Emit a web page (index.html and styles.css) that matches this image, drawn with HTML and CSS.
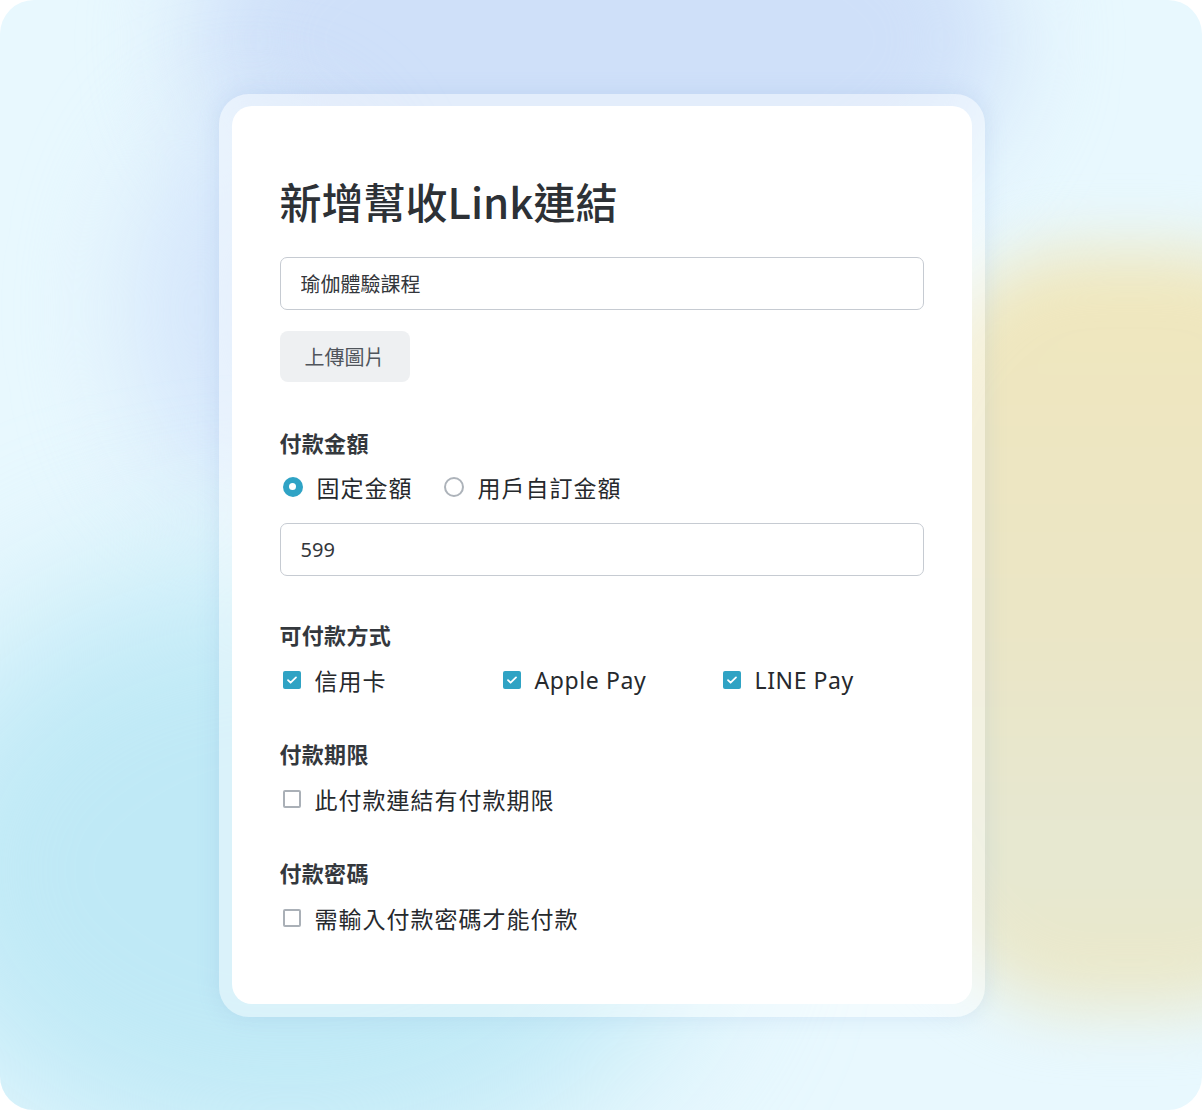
FILE: index.html
```html
<!DOCTYPE html>
<html lang="zh-Hant">

<head>
    <meta charset="UTF-8">
    <meta name="viewport" content="width=device-width, initial-scale=1.0">
    <title>新增幫收Link連結</title>
    <link rel="stylesheet" href="styles.css">
</head>

<body>
    <div class="canvas">
        <div class="blob blob-blue"></div>
        <div class="blob blob-blue-left"></div>
        <div class="blob blob-cyan"></div>
        <div class="blob blob-yellow"></div>

        <div class="frame">
            <form class="card">
                <h1 class="title">新增幫收Link連結</h1>

                <input class="field" type="text" value="瑜伽體驗課程" readonly>
                <div class="upload-row">
                    <button type="button" class="btn-upload">上傳圖片</button>
                </div>

                <section class="group group-amount">
                    <h2 class="group-label">付款金額</h2>
                    <div class="options">
                        <label class="option">
                            <span class="radio checked"></span>
                            <span class="option-text">固定金額</span>
                        </label>
                        <label class="option">
                            <span class="radio"></span>
                            <span class="option-text">用戶自訂金額</span>
                        </label>
                    </div>
                    <input class="field field-amount" type="text" value="599" readonly>
                </section>

                <section class="group group-methods">
                    <h2 class="group-label">可付款方式</h2>
                    <div class="options options-grid">
                        <label class="option">
                            <span class="checkbox checked">
                                <svg viewBox="0 0 18 18" width="18" height="18"><path d="M5 9.2l2.6 2.5L13 6.4" fill="none" stroke="#fff" stroke-width="1.8" stroke-linecap="round" stroke-linejoin="round"/></svg>
                            </span>
                            <span class="option-text">信用卡</span>
                        </label>
                        <label class="option">
                            <span class="checkbox checked">
                                <svg viewBox="0 0 18 18" width="18" height="18"><path d="M5 9.2l2.6 2.5L13 6.4" fill="none" stroke="#fff" stroke-width="1.8" stroke-linecap="round" stroke-linejoin="round"/></svg>
                            </span>
                            <span class="option-text latin">Apple Pay</span>
                        </label>
                        <label class="option">
                            <span class="checkbox checked">
                                <svg viewBox="0 0 18 18" width="18" height="18"><path d="M5 9.2l2.6 2.5L13 6.4" fill="none" stroke="#fff" stroke-width="1.8" stroke-linecap="round" stroke-linejoin="round"/></svg>
                            </span>
                            <span class="option-text latin">LINE Pay</span>
                        </label>
                    </div>
                </section>

                <section class="group group-deadline">
                    <h2 class="group-label">付款期限</h2>
                    <div class="options">
                        <label class="option">
                            <span class="checkbox"></span>
                            <span class="option-text">此付款連結有付款期限</span>
                        </label>
                    </div>
                </section>

                <section class="group group-password">
                    <h2 class="group-label">付款密碼</h2>
                    <div class="options">
                        <label class="option">
                            <span class="checkbox"></span>
                            <span class="option-text">需輸入付款密碼才能付款</span>
                        </label>
                    </div>
                </section>
            </form>
        </div>
    </div>
</body>

</html>
```

FILE: styles.css
```css
* {
    box-sizing: border-box;
}

body {
    margin: 0;
    background: #fff;
    font-family: 'Noto Sans', 'Noto Sans CJK TC', sans-serif;
    color: #2e3237;
}

.canvas {
    position: relative;
    width: 1202px;
    height: 1110px;
    border-radius: 34px;
    overflow: hidden;
    background: #e8f8fe;
    display: flex;
    align-items: center;
    justify-content: center;
}

/* soft colour clouds behind the card */
.blob {
    position: absolute;
    border-radius: 50%;
    filter: blur(70px);
}

.blob-blue {
    width: 820px;
    height: 460px;
    left: 190px;
    top: -190px;
    background: #cfe0f9;
    filter: blur(50px);
}

.blob-blue-left {
    width: 240px;
    height: 380px;
    left: 130px;
    top: 120px;
    background: #d5e6fb;
    filter: blur(55px);
}

.blob-cyan {
    width: 820px;
    height: 620px;
    left: -120px;
    top: 560px;
    background: #bfe9f6;
    filter: blur(80px);
}

.blob-yellow {
    width: 520px;
    height: 760px;
    left: 870px;
    top: 250px;
    border-radius: 40%;
    background: linear-gradient(180deg, #f0e7bd 0%, #ebe6c6 50%, #e6e8d2 80%, #ece8c8 100%);
    filter: blur(32px);
}

.frame {
    position: relative;
    margin-left: 1px;
    padding: 12px 13px 13px 13px;
    border-radius: 30px;
    background: rgba(255, 255, 255, 0.42);
    box-shadow: 0 0 22px rgba(130, 165, 215, 0.2);
}

.card {
    width: 740px;
    padding: 67px 48px 70px;
    background: #fff;
    border-radius: 20px;
    display: flex;
    flex-direction: column;
}

.title {
    margin: 0;
    font-family: 'Noto Sans CJK TC', sans-serif;
    font-size: 42px;
    line-height: 56px;
    font-weight: 500;
    color: #2d3136;
}

.field {
    display: block;
    width: 100%;
    height: 53px;
    margin: 28px 0 0;
    padding: 0 20px;
    border: 1px solid #c6cbd2;
    border-radius: 7px;
    font-family: 'Noto Sans', 'Noto Sans CJK TC', sans-serif;
    font-size: 20px;
    color: #33363b;
    background: #fff;
    outline: none;
}

.upload-row {
    margin-top: 21px;
}

.btn-upload {
    height: 51px;
    padding: 0 25px;
    border: none;
    border-radius: 8px;
    background: #eef0f2;
    font-family: 'Noto Sans CJK TC', sans-serif;
    font-size: 20px;
    color: #50555c;
}

.group {
    margin-top: 46px;
}

.group-methods {
    margin-top: 44px;
}

.group-deadline {
    margin-top: 43px;
}

.group-password {
    margin-top: 43px;
}

.group-label {
    margin: 0;
    font-family: 'Noto Sans CJK TC', sans-serif;
    font-size: 22px;
    line-height: 28px;
    font-weight: 700;
    letter-spacing: 0.3px;
    color: #34383d;
}

.options {
    display: flex;
    gap: 28px;
    margin-top: 16px;
}

.group-amount .options {
    margin-top: 15px;
}

.options-grid {
    display: grid;
    grid-template-columns: 220px 220px 220px;
    gap: 0;
}

.option {
    display: flex;
    align-items: center;
    height: 32px;
    padding-left: 3px;
}

.option-text {
    margin-left: 14px;
    font-size: 23px;
    letter-spacing: 1px;
    color: #26292d;
}

.option-text.latin {
    letter-spacing: 0.6px;
}

.radio {
    width: 20px;
    height: 20px;
    border-radius: 50%;
    border: 2px solid #adb3ba;
    flex-shrink: 0;
}

.radio.checked {
    border: none;
    background: #2fa3c5;
    display: flex;
    align-items: center;
    justify-content: center;
}

.radio.checked::after {
    content: '';
    width: 7px;
    height: 7px;
    border-radius: 50%;
    background: #fff;
}

.checkbox {
    width: 18px;
    height: 18px;
    border-radius: 2px;
    border: 2px solid #aab0b7;
    flex-shrink: 0;
    display: flex;
}

.checkbox.checked {
    border: none;
    background: #30a3c4;
}

.field-amount {
    margin-top: 20px;
}
```
